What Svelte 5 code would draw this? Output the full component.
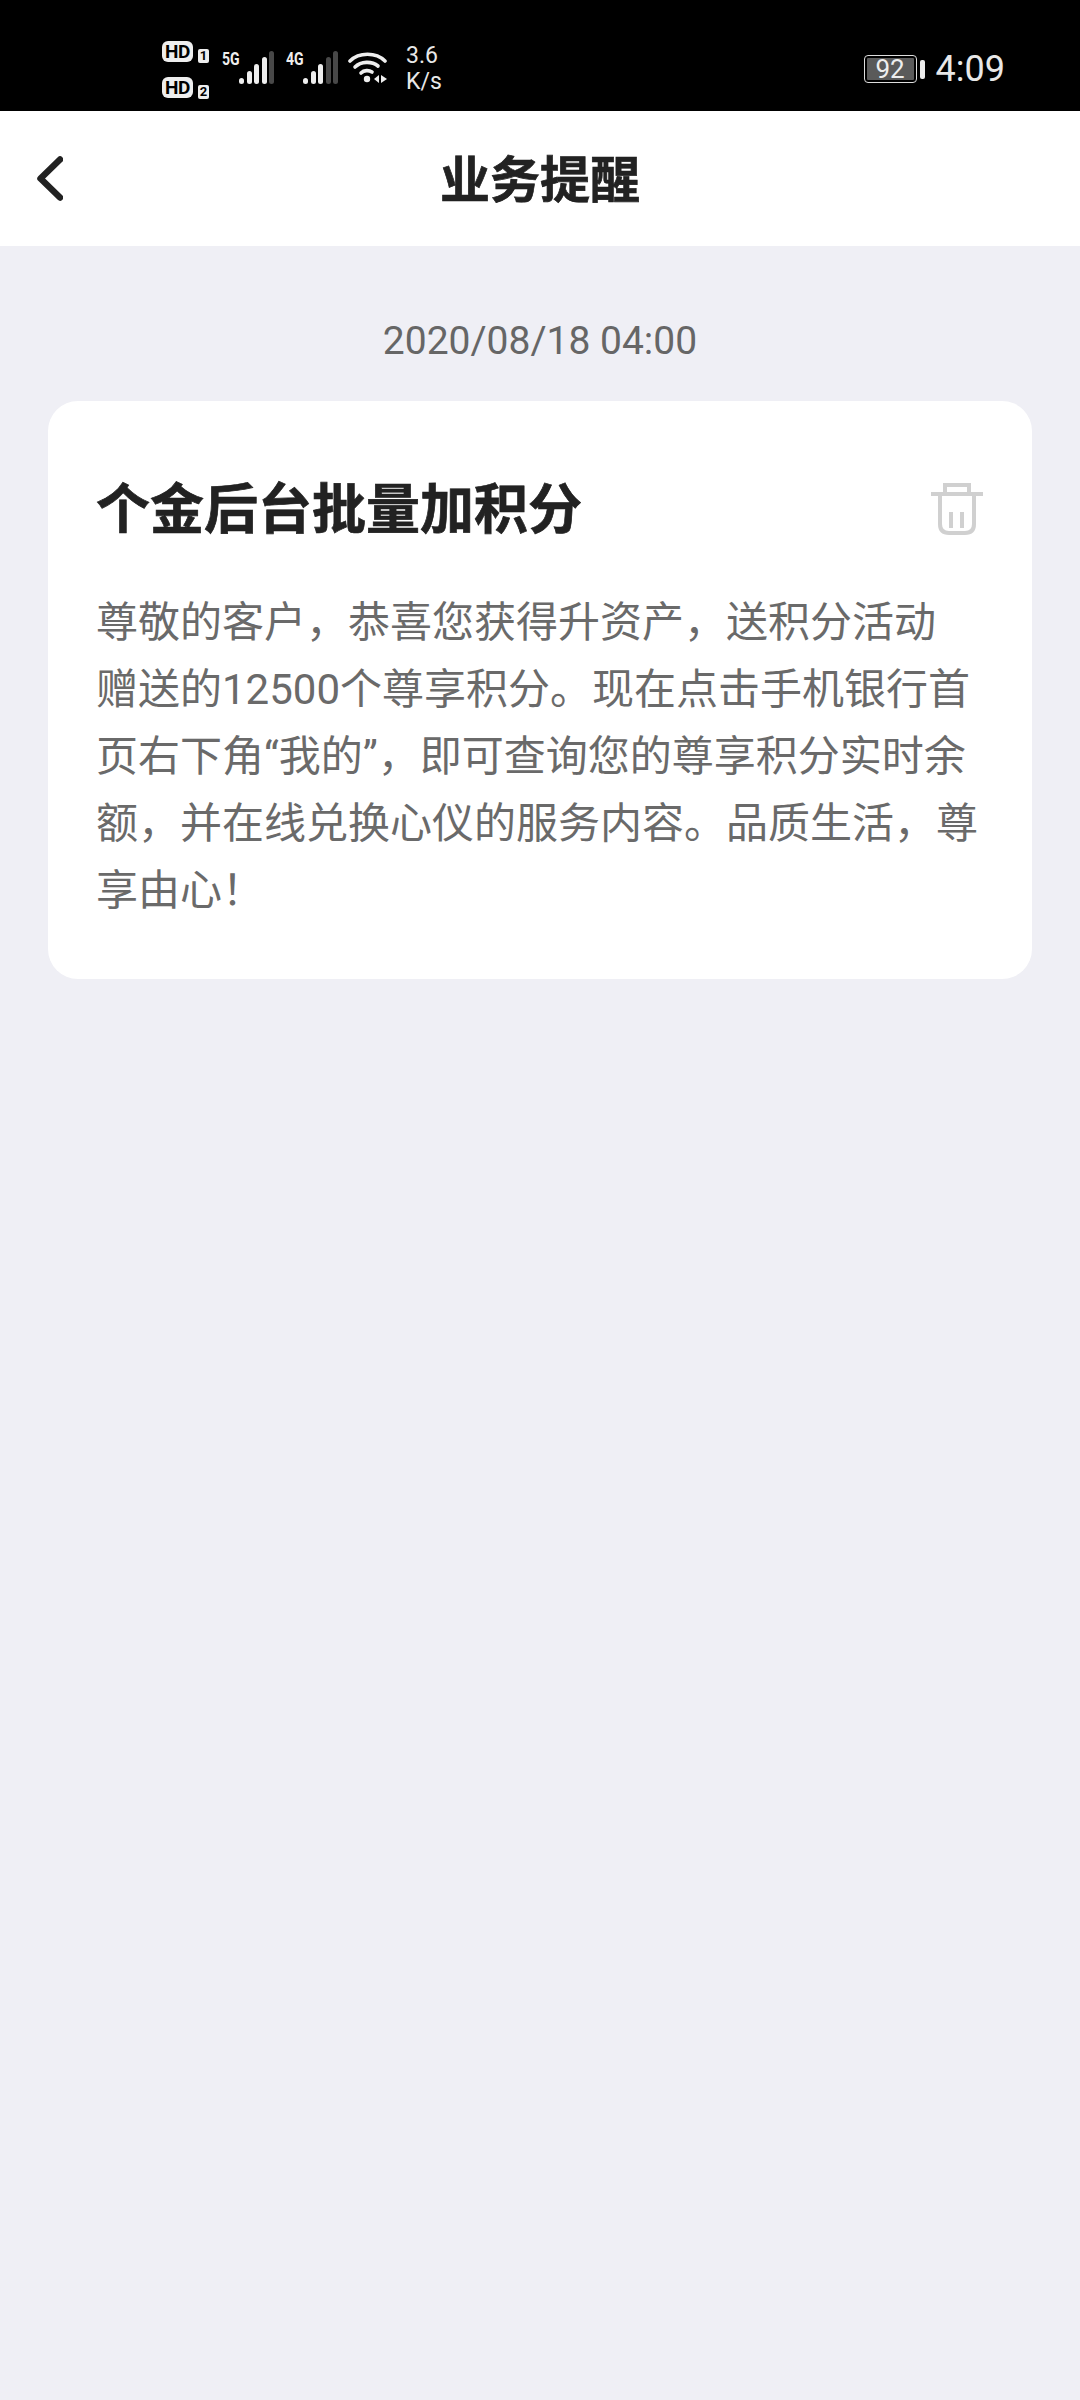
<script>
  const lines = [
    '尊敬的客户，恭喜您获得升资产，送积分活动',
    '赠送的12500个尊享积分。现在点击手机银行首',
    '页右下角“我的”，即可查询您的尊享积分实时余',
    '额，并在线兑换心仪的服务内容。品质生活，尊',
    '享由心！'
  ];
  const sims = [
    { label: '5G', levels: [1, 1, 1, 1, 0.3] },
    { label: '4G', levels: [1, 1, 1, 0.3, 0.3] }
  ];
  const heights = [6, 13, 20, 27, 33];
</script>

<div class="page">
  <div class="statusbar">
    <div class="status-left">
      <div class="hd-col">
        <div class="hd"><span class="hd-box">HD</span><span class="hd-num">1</span></div>
        <div class="hd"><span class="hd-box">HD</span><span class="hd-num">2</span></div>
      </div>
      {#each sims as sim}
        <div class="sim">
          <span class="sim-label">{sim.label}</span>
          <div class="bars">
            {#each sim.levels as level, i}
              <i class="bar" style="height:{heights[i]}px;opacity:{level}"></i>
            {/each}
          </div>
        </div>
      {/each}
      <svg class="wifi" width="39" height="31" viewBox="0 0 39 31" fill="none" stroke="#eee" stroke-width="3.6" stroke-linecap="round">
        <path d="M2 9 C11 0 28 0 37 9" />
        <path d="M7 15 C13 9 24 9 30 14" />
        <path d="M13 21 C16 18 21 18 24 20" />
        <circle cx="19" cy="27" r="3.2" fill="#eee" stroke="none" />
        <path d="M31 23 L31 31 L26 27 Z M33 23 L39 27 L33 31 Z" fill="#eee" stroke="none" />
      </svg>
      <div class="speed"><span>3.6</span><span>K/s</span></div>
    </div>
    <div class="status-right">
      <div class="battery">
        <div class="battery-body"><span>92</span></div>
        <i class="battery-cap"></i>
      </div>
      <span class="clock">4:09</span>
    </div>
  </div>

  <header class="topbar">
    <svg class="back" width="26" height="45" viewBox="0 0 26 45" fill="none" stroke="#222" stroke-width="6.5" stroke-linecap="round" stroke-linejoin="round">
      <path d="M23 3.5 L3.5 22.5 L23 41.5" />
    </svg>
    <h1>业务提醒</h1>
  </header>

  <main class="content">
    <div class="date">2020/08/18 04:00</div>
    <article class="card">
      <div class="card-head">
        <h2>个金后台批量加积分</h2>
        <svg class="trash" width="52" height="52" viewBox="0 0 52 52" fill="none" stroke="#d0d0d0" stroke-width="4">
          <path d="M0 11 H52" />
          <path d="M14 11 V2 H38 V11" />
          <path d="M9 13 V41 Q9 50 18 50 H34 Q43 50 43 41 V13" />
          <path d="M20 29 V45 M31 29 V45" />
        </svg>
      </div>
      <p class="body">
        {#each lines as line}
          <span>{line}</span>
        {/each}
      </p>
    </article>
  </main>
</div>

<style>
  :global(body) {
    margin: 0;
    background: #efeff5;
  }

  .page {
    width: 1080px;
    height: 2400px;
    background: #efeff5;
    font-family: Roboto, "Noto Sans CJK SC", sans-serif;
    overflow: hidden;
  }

  .statusbar {
    height: 111px;
    background: #000;
    color: #fff;
    display: flex;
    justify-content: space-between;
    align-items: center;
    padding: 27px 75px 0 162px;
    box-sizing: border-box;
  }

  .status-left {
    display: flex;
    align-items: center;
  }

  .hd-col {
    display: flex;
    flex-direction: column;
    gap: 15px;
    margin-right: 13px;
  }

  .hd {
    display: flex;
    align-items: flex-end;
    gap: 5px;
  }

  .hd-box {
    width: 31px;
    height: 21px;
    line-height: 21px;
    background: #eee;
    color: #000;
    border-radius: 6px;
    font-size: 19px;
    font-weight: 700;
    text-align: center;
    letter-spacing: -0.5px;
  }

  .hd-num {
    width: 11px;
    height: 14px;
    line-height: 14px;
    margin-bottom: -1px;
    background: #eee;
    color: #000;
    border-radius: 2px;
    font-size: 13px;
    font-weight: 700;
    text-align: center;
  }

  .sim {
    display: flex;
    align-items: flex-end;
    height: 33px;
    margin-right: 12px;
    margin-bottom: 4px;
  }

  .sim-label {
    width: 17px;
    margin-top: 0;
    align-self: flex-start;
    font-size: 18px;
    line-height: 16px;
    font-weight: 700;
    color: #eee;
    transform: scaleX(0.78);
    transform-origin: left;
  }

  .bars {
    display: flex;
    align-items: flex-end;
    gap: 2.5px;
  }

  .bar {
    width: 5px;
    background: #eee;
    border-radius: 3px;
  }

  .wifi {
    margin: 0 19px 4px -2px;
  }

  .speed {
    display: flex;
    flex-direction: column;
    font-size: 23px;
    line-height: 26px;
    color: #e8e8e8;
  }

  .status-right {
    display: flex;
    align-items: center;
    gap: 11px;
  }

  .battery {
    display: flex;
    align-items: center;
    gap: 3px;
  }

  .battery-body {
    width: 53px;
    height: 28px;
    box-sizing: border-box;
    border: 1.5px solid #ddd;
    border-radius: 4px;
    padding: 2px;
  }

  .battery-body span {
    display: block;
    height: 100%;
    background: #5a5a5a;
    border-radius: 1px;
    font-size: 26px;
    line-height: 22px;
    text-align: center;
    color: #eee;
  }

  .battery-cap {
    width: 5px;
    height: 19px;
    background: #eee;
    border-radius: 2px;
  }

  .clock {
    font-size: 36px;
    color: #e8e8e8;
  }

  .topbar {
    position: relative;
    height: 135px;
    box-sizing: border-box;
    padding-bottom: 5px;
    background: #fff;
    display: flex;
    align-items: center;
    justify-content: center;
  }

  .back {
    position: absolute;
    left: 37px;
    top: 45px;
  }

  .topbar h1 {
    margin: 0;
    font-size: 50px;
    font-weight: 700;
    color: #222;
    -webkit-text-stroke: 0.7px #222;
  }

  .content {
    padding: 0 48px;
  }

  .date {
    margin-top: 73px;
    height: 45px;
    line-height: 45px;
    font-size: 39px;
    color: #666;
    text-align: center;
  }

  .card {
    margin-top: 37px;
    height: 578px;
    box-sizing: border-box;
    background: #fff;
    border-radius: 30px;
    padding: 78px 49px 0 48px;
  }

  .card-head {
    display: flex;
    justify-content: space-between;
    align-items: center;
    height: 64px;
  }

  .card-head h2 {
    margin: 0;
    font-size: 54px;
    font-weight: 700;
    color: #222;
    line-height: 64px;
    -webkit-text-stroke: 0.7px #222;
  }

  .trash {
    margin-bottom: 4px;
  }

  .body {
    margin: 46px 0 0;
    font-size: 42px;
    line-height: 67px;
    color: #6a6a6a;
  }

  .body span {
    display: block;
    white-space: nowrap;
  }
</style>
